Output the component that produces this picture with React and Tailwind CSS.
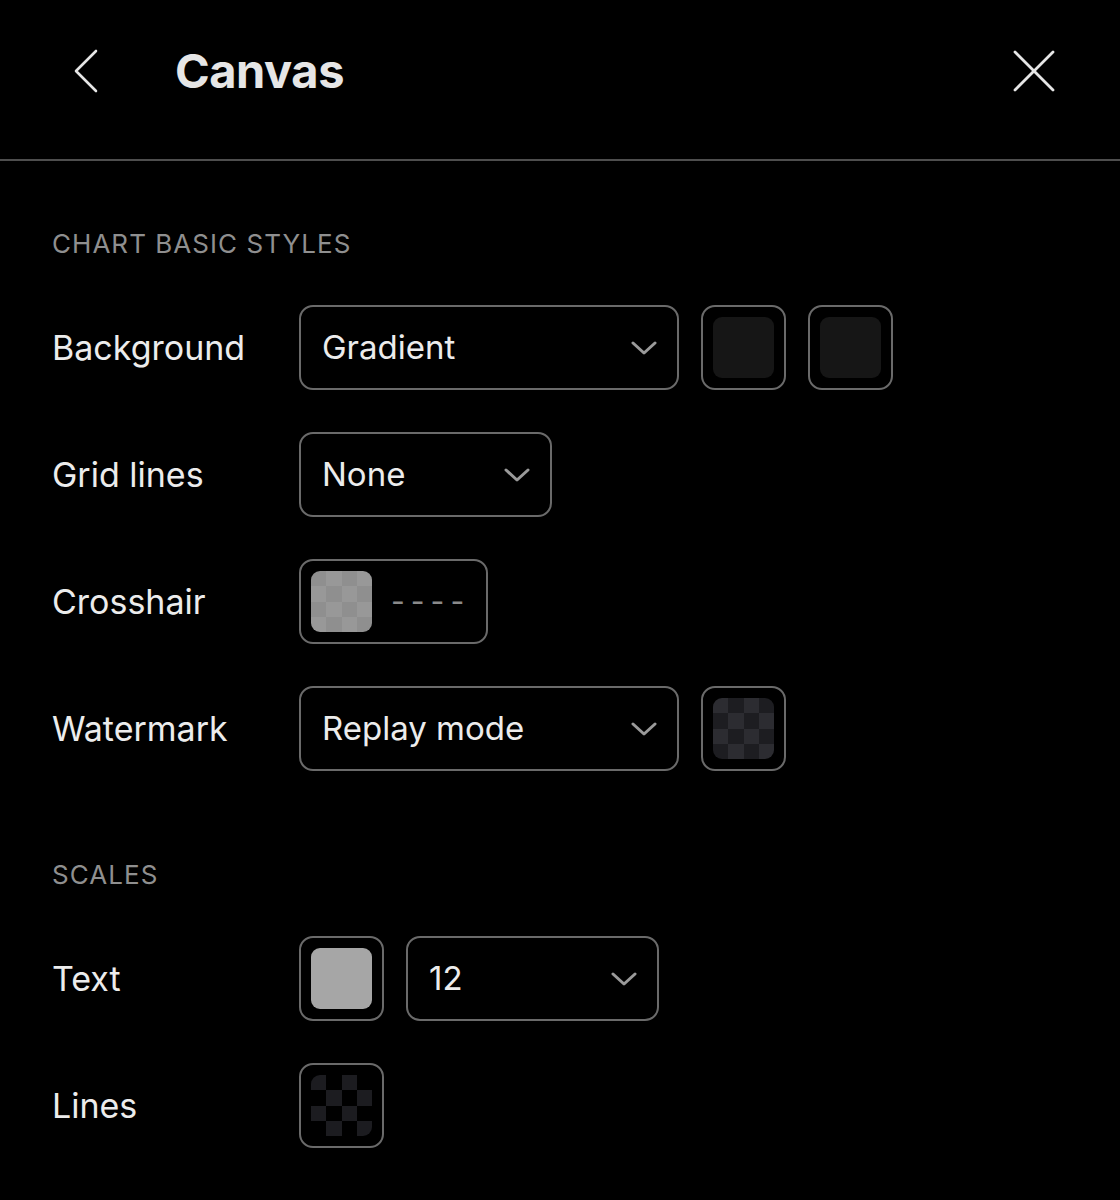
import { useState } from "react";

const font = { fontFamily: "Inter, 'Liberation Sans', sans-serif" };

function Chevron() {
  return (
    <svg width="26" height="14" viewBox="0 0 26 14" fill="none" className="shrink-0">
      <path d="M2 2 L13 12 L24 2" stroke="#9a9a9a" strokeWidth="3" strokeLinecap="round" strokeLinejoin="round" />
    </svg>
  );
}

function Select({ value, width }) {
  return (
    <button
      type="button"
      className={`flex h-[85px] items-center justify-between rounded-[14px] border-2 border-[#6a6a6a] pl-[21px] pr-[20px] text-[33px] text-[#ececec] ${width}`}
    >
      <span>{value}</span>
      <Chevron />
    </button>
  );
}

function Checker({ a, b, offset }) {
  const cells = [];
  for (let r = 0; r < 4; r++) {
    for (let c = 0; c < 4; c++) {
      cells.push((r + c + offset) % 2 === 0 ? a : b);
    }
  }
  return (
    <div className="grid h-[61px] w-[61px] grid-cols-4 grid-rows-4 overflow-hidden rounded-[9px]">
      {cells.map((color, i) => (
        <div key={i} className={color} />
      ))}
    </div>
  );
}

function Swatch({ children }) {
  return (
    <div className="flex h-[85px] w-[85px] shrink-0 items-center justify-center rounded-[14px] border-2 border-[#6a6a6a]">
      {children}
    </div>
  );
}

function Row({ label, children }) {
  return (
    <div className="flex items-center">
      <div className="w-[247px] shrink-0 text-[34px] text-[#ececec]">{label}</div>
      <div className="flex items-center gap-[22px]">{children}</div>
    </div>
  );
}

function SectionTitle({ children }) {
  return (
    <h2 className="text-[26px] leading-[32px] tracking-[0.04em] text-[#8f8f8f]">{children}</h2>
  );
}

export default function App() {
  const [open] = useState(true);

  if (!open) return null;

  return (
    <div className="min-h-[1200px] w-full bg-black" style={font}>
      <header className="flex h-[161px] items-center border-b-2 border-[#4e4e4e] pb-[17px] pl-[72px] pr-[64px]">
        <svg width="28" height="44" viewBox="0 0 28 44" fill="none">
          <path d="M24 2 L4 22 L24 42" stroke="#e6e6e6" strokeWidth="2.6" strokeLinecap="round" strokeLinejoin="round" />
        </svg>
        <h1 className="ml-[75px] text-[47px] font-bold tracking-[-0.01em] text-[#e6e6e6]">Canvas</h1>
        <svg width="44" height="44" viewBox="0 0 44 44" fill="none" className="ml-auto">
          <path d="M3 3 L41 41 M41 3 L3 41" stroke="#e6e6e6" strokeWidth="2.8" strokeLinecap="round" />
        </svg>
      </header>

      <main className="px-[52px] pt-[67px]">
        <SectionTitle>CHART BASIC STYLES</SectionTitle>

        <div className="mt-[45px] flex flex-col gap-[42px]">
          <Row label="Background">
            <Select value="Gradient" width="w-[380px]" />
            <Swatch>
              <div className="h-[61px] w-[61px] rounded-[9px] bg-[#161616]" />
            </Swatch>
            <Swatch>
              <div className="h-[61px] w-[61px] rounded-[9px] bg-[#161616]" />
            </Swatch>
          </Row>

          <Row label="Grid lines">
            <Select value="None" width="w-[253px]" />
          </Row>

          <Row label="Crosshair">
            <div className="flex h-[85px] w-[189px] items-center rounded-[14px] border-2 border-[#6a6a6a] pl-[10px]">
              <Checker a="bg-[#8f8f8f]" b="bg-[#989898]" offset={0} />
              <span className="ml-[19px] text-[30px] tracking-[0.2em] text-[#8a8a8a]">----</span>
            </div>
          </Row>

          <Row label="Watermark">
            <Select value="Replay mode" width="w-[380px]" />
            <Swatch>
              <Checker a="bg-[#2c2c31]" b="bg-[#1d1d21]" offset={0} />
            </Swatch>
          </Row>
        </div>

        <div className="mt-[88px]">
          <SectionTitle>SCALES</SectionTitle>
        </div>

        <div className="mt-[45px] flex flex-col gap-[42px]">
          <Row label="Text">
            <Swatch>
              <div className="h-[61px] w-[61px] rounded-[9px] bg-[#a6a6a6]" />
            </Swatch>
            <Select value="12" width="w-[253px]" />
          </Row>

          <Row label="Lines">
            <Swatch>
              <Checker a="bg-[#1c1c20]" b="bg-black" offset={0} />
            </Swatch>
          </Row>
        </div>
      </main>
    </div>
  );
}
